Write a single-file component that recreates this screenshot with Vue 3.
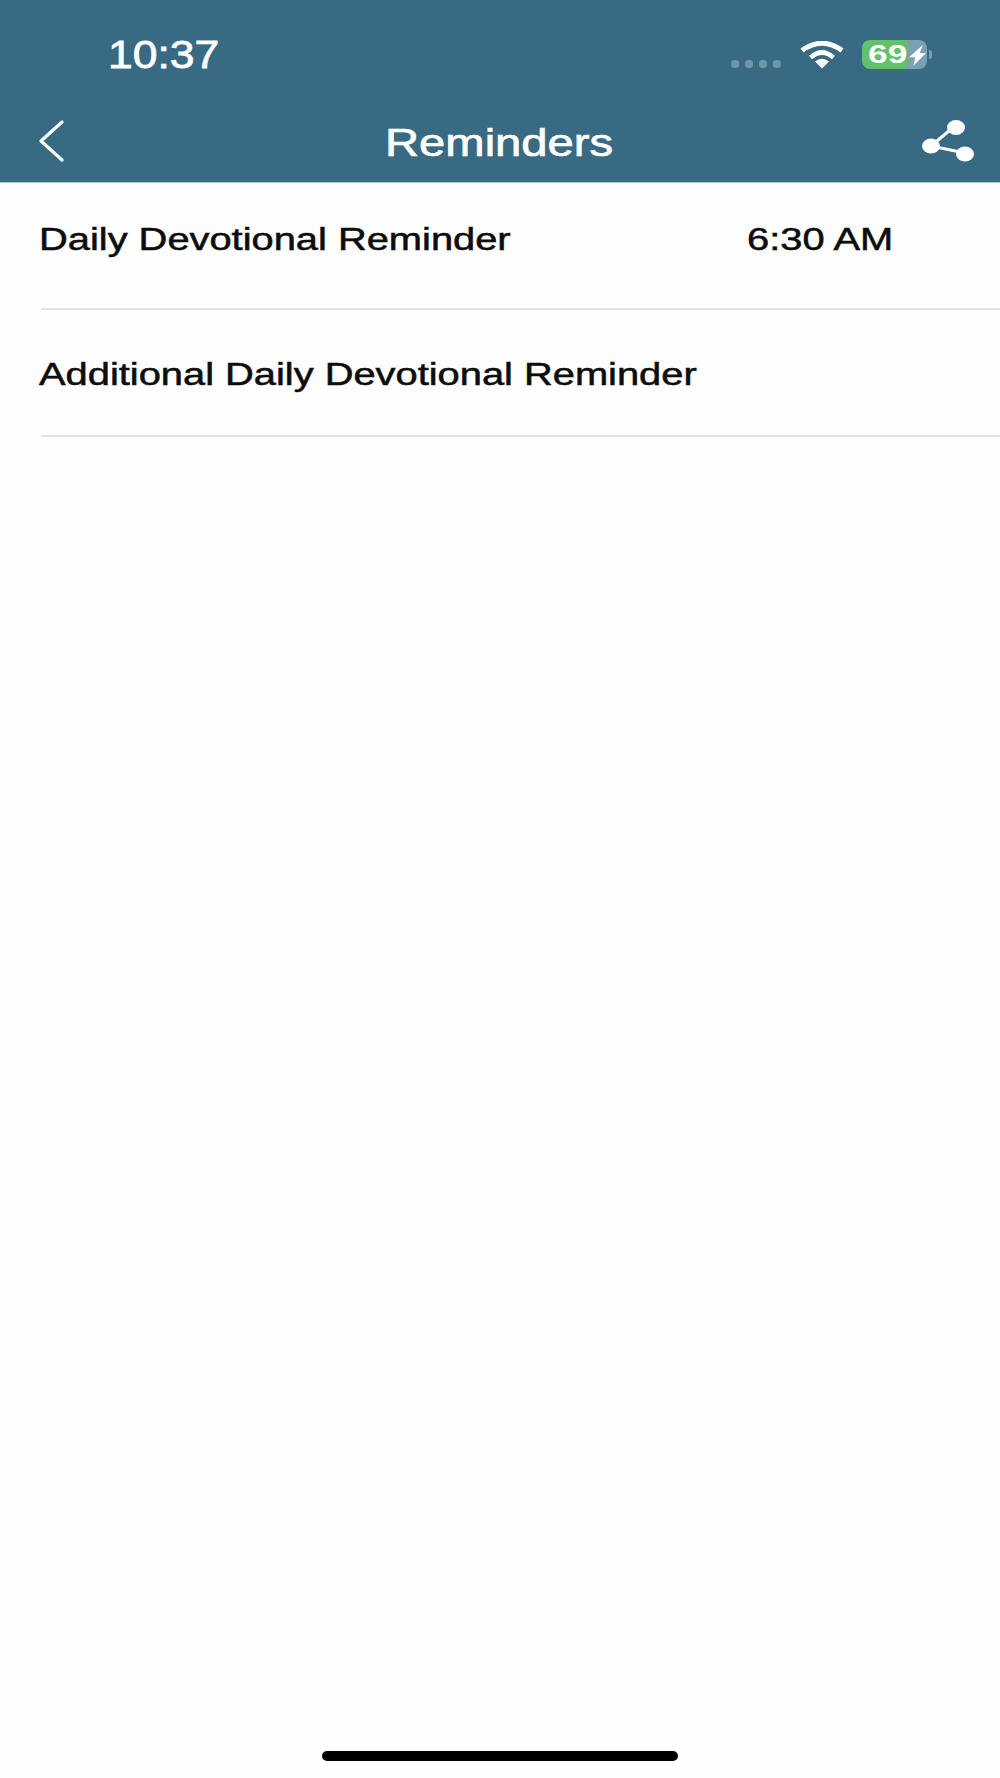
<script setup>
const rows = [
  { label: 'Daily Devotional Reminder', time: '6:30 AM' },
  { label: 'Additional Daily Devotional Reminder', time: '' },
]
</script>

<template>
  <div class="screen">
    <header class="header">
      <div class="status">
        <span class="clock wide">10:37</span>
        <div class="dots"><i></i><i></i><i></i><i></i></div>
        <svg class="wifi" width="44" height="28" viewBox="0 0 44 28">
          <path d="M22 27.5 L15 20.5 Q22 15 29 20.5 Z" fill="#fff" />
          <path d="M10.5 16.5 Q22 6.5 33.5 16.5" fill="none" stroke="#fff" stroke-width="4.6" />
          <path d="M2 9.5 Q22 -5 42 9.5" fill="none" stroke="#fff" stroke-width="5" />
        </svg>
        <div class="battery">
          <div class="cell">
            <span class="fill"><span class="pct">69</span></span>
            <span class="rest">
              <svg width="17" height="22" viewBox="0 0 16 20"><path d="M13 0.5 L0 12 H6 L4 20 L16 8 H10 Z" fill="#fff" /></svg>
            </span>
          </div>
          <span class="nub"></span>
        </div>
      </div>
      <nav class="nav">
        <svg class="back" width="26" height="42" viewBox="0 0 26 42">
          <path d="M24 2 L3 21 L24 40" fill="none" stroke="#fff" stroke-width="3.2" stroke-linecap="round" stroke-linejoin="round" />
        </svg>
        <span class="title wide">Reminders</span>
        <svg class="share" width="52" height="44" viewBox="0 0 52 44">
          <path d="M9 26 L34 5 M9 26 L43 33" stroke="#fff" stroke-width="3" fill="none" />
          <ellipse cx="9" cy="26" rx="9" ry="7.5" fill="#fff" />
          <ellipse cx="34" cy="7.5" rx="9" ry="7.5" fill="#fff" />
          <ellipse cx="43" cy="34" rx="9" ry="7.5" fill="#fff" />
        </svg>
      </nav>
    </header>
    <main class="list">
      <div v-for="row in rows" :key="row.label" class="row">
        <span class="label">{{ row.label }}</span>
        <span class="time">{{ row.time }}</span>
      </div>
    </main>
    <div class="home"></div>
  </div>
</template>

<style>
html, body { margin: 0; background: #fefefe; }
</style>

<style scoped>
.screen {
  width: 1000px;
  height: 1778px;
  display: flex;
  flex-direction: column;
  background: #fefefe;
  font-family: "Liberation Sans", Arial, sans-serif;
  overflow: hidden;
}
.header {
  height: 182px;
  background: #386a83;
  border-bottom: 1px solid #a9c3d1;
  color: #fff;
  flex: none;
}
.wide { display: inline-block; transform-origin: left center; }
.status {
  height: 100px;
  display: flex;
  align-items: flex-start;
  padding-left: 108px;
}
.clock {
  width: 90px;
  margin-top: 33px;
  font-size: 39px;
  line-height: 44px;
  -webkit-text-stroke: 0.8px #fff;
  transform: scaleX(1.14);
}
.dots {
  display: flex;
  gap: 6px;
  margin: 60px 0 0 533px;
}
.dots i {
  width: 8px;
  height: 8px;
  border-radius: 3px;
  background: #6d97a9;
}
.wifi { margin: 41px 0 0 19px; }
.battery {
  display: flex;
  align-items: center;
  margin: 40px 0 0 18px;
}
.cell {
  width: 65px;
  height: 29px;
  border-radius: 8px;
  overflow: hidden;
  display: flex;
}
.fill {
  width: 45px;
  background: #62c16a;
  display: flex;
  align-items: center;
  padding-left: 6px;
  box-sizing: border-box;
}
.pct {
  font-size: 26px;
  font-weight: 700;
  line-height: 29px;
  color: #fff;
  display: inline-block;
  transform: scaleX(1.36);
  transform-origin: left center;
}
.rest {
  flex: 1;
  background: #79a0b3;
  display: flex;
  align-items: center;
  justify-content: center;
}
.nub {
  width: 3px;
  height: 9px;
  margin-left: 2px;
  border-radius: 0 4px 4px 0;
  background: #79a0b3;
}
.nav {
  height: 82px;
  display: flex;
  align-items: flex-start;
  padding-left: 38px;
}
.back { margin-top: 20px; }
.title {
  margin: 20px 0 0 321px;
  width: 190px;
  font-size: 39px;
  line-height: 46px;
  -webkit-text-stroke: 0.7px #fff;
  transform: scaleX(1.21);
}
.share { margin: 20px 0 0 347px; }
.list { flex: 1; }
.row {
  height: 125px;
  margin-left: 41px;
  border-bottom: 2px solid #e2e2e2;
  display: grid;
  grid-template-columns: 706px 1fr;
  align-items: start;
  color: #0d0d0d;
  font-size: 32px;
  line-height: 36px;
  -webkit-text-stroke: 0.55px #0d0d0d;
}
.label, .time {
  display: block;
  margin-top: 38px;
  transform-origin: left center;
  transform: scaleX(1.245);
  white-space: nowrap;
}
.row + .row .label { margin-top: 46px; }
.label { margin-left: -2px; }
.home {
  flex: none;
  width: 356px;
  height: 10px;
  margin: 0 auto 17px;
  border-radius: 5px;
  background: #000;
}
</style>
